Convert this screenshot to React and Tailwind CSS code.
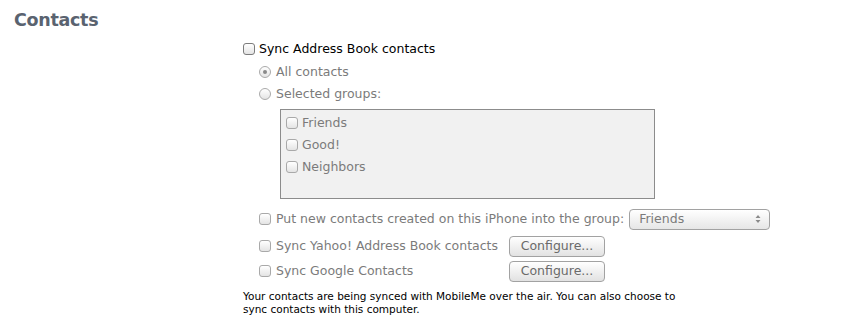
import React from 'react'

function Box({ dark }) {
  return (
    <span
      className={`inline-block w-[12px] h-[12px] shrink-0 rounded-[3px] border bg-gradient-to-b from-white to-[#e4e4e4] ${
        dark ? 'border-[#7c7c7c]' : 'border-[#a9a9a9]'
      }`}
    />
  )
}

function Radio({ on }) {
  return (
    <span className="flex items-center justify-center w-[12px] h-[12px] shrink-0 rounded-full border border-[#aaaaaa] bg-gradient-to-b from-white to-[#e4e4e4]">
      {on && <span className="w-[4px] h-[4px] rounded-full bg-[#8a8a8a]" />}
    </span>
  )
}

function Button({ children }) {
  return (
    <button className="w-[96px] h-[21px] rounded-[4px] border border-[#a2a2a2] bg-gradient-to-b from-white to-[#e2e2e2] text-[12.5px] text-[#6a6a6a] leading-none">
      {children}
    </button>
  )
}

export default function App() {
  return (
    <div className="w-[854px] h-[324px] bg-white overflow-hidden pt-[1px] font-['DejaVu_Sans',sans-serif]">
      <h2 className="pl-[14px] pt-[8px] text-[17.5px] leading-[22px] font-bold tracking-[-0.3px] text-[#5a6370]">
        Contacts
      </h2>

      <div className="ml-[243px]">
        {/* Sync Address Book */}
        <div className="mt-[7px] h-[22px] flex items-center gap-[4px]">
          <Box dark />
          <span className="text-[12.5px] text-black">Sync Address Book contacts</span>
        </div>

        <div className="ml-[16px] text-[12.5px] text-[#7b7b7b]">
          <div className="mt-[1px] h-[22px] flex items-center gap-[5px]">
            <Radio on />
            <span>All contacts</span>
          </div>
          <div className="h-[22px] flex items-center gap-[5px]">
            <Radio />
            <span>Selected groups:</span>
          </div>

          {/* Groups list */}
          <div className="mt-[4px] ml-[21px] w-[375px] h-[90px] border border-[#8c8c8c] bg-[#f1f1f1] pt-[2px] pl-[5px]">
            {['Friends', 'Good!', 'Neighbors'].map(g => (
              <div key={g} className="h-[22px] flex items-center gap-[4px]">
                <Box />
                <span>{g}</span>
              </div>
            ))}
          </div>

          {/* Put new contacts */}
          <div className="mt-[9px] h-[22px] flex items-center">
            <Box />
            <span className="ml-[5px]">Put new contacts created on this iPhone into the group:</span>
            <div className="ml-[5px] w-[141px] h-[21px] rounded-[4px] border border-[#a2a2a2] bg-gradient-to-b from-white to-[#e6e6e6] flex items-center justify-between pl-[9px] pr-[8px]">
              <span>Friends</span>
              <svg width="6" height="10" viewBox="0 0 6 10">
                <path d="M0.5 4 L3 1 L5.5 4 Z M0.5 6 L3 9 L5.5 6 Z" fill="#8a8a8a" />
              </svg>
            </div>
          </div>

          <div className="mt-[4px] h-[24px] flex items-center">
            <div className="w-[250px] flex items-center gap-[5px]">
              <Box />
              <span>Sync Yahoo! Address Book contacts</span>
            </div>
            <Button>Configure...</Button>
          </div>

          <div className="mt-[1px] h-[24px] flex items-center">
            <div className="w-[250px] flex items-center gap-[5px]">
              <Box />
              <span>Sync Google Contacts</span>
            </div>
            <Button>Configure...</Button>
          </div>
        </div>

        <p className="mt-[7px] w-[450px] text-[10.5px] leading-[13px] text-black">
          Your contacts are being synced with MobileMe over the air. You can also choose to sync contacts with this computer.
        </p>
      </div>
    </div>
  )
}
